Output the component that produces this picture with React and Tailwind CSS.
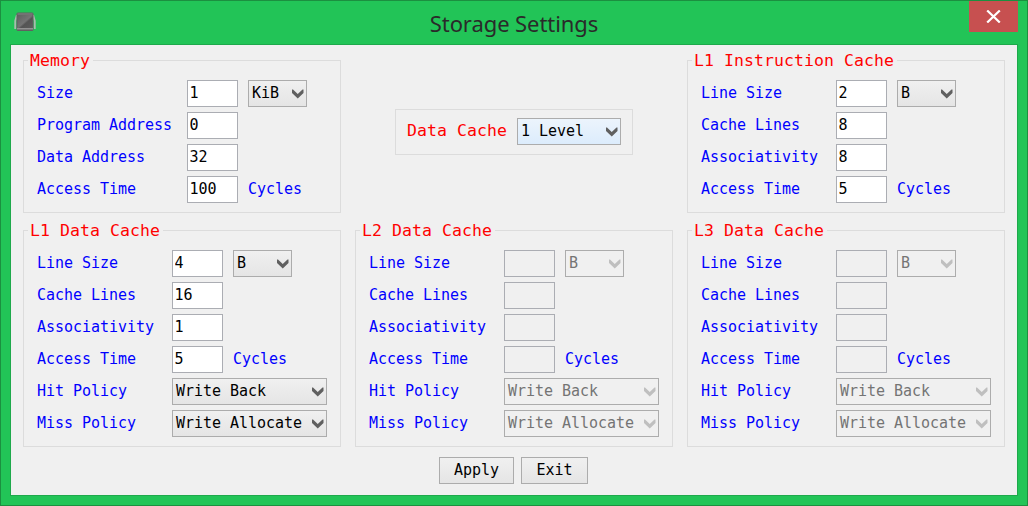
import React from "react";

const MONO = "font-['DejaVu_Sans_Mono',monospace]";

function Chevron({ disabled }) {
  return (
    <svg width="12" height="10" viewBox="0 0 12 10" className={disabled ? "shrink-0 fill-[#bfbfbf]" : "shrink-0 fill-[#606060]"}>
      <path d="M0 0.5H1L5.75 5L10.5 0.5H11.5V4L5.75 9.5L0 4Z" />
    </svg>
  );
}

function Field({ value, disabled }) {
  return (
    <input
      defaultValue={value}
      disabled={disabled}
      className={
        "h-[27px] w-[51px] border border-[#abadb3] pl-[1.5px] pb-[2px] text-[15px] tracking-[-0.03px] text-black outline-none " +
        (disabled ? "bg-[#f0f0f0]" : "bg-white")
      }
    />
  );
}

function Combo({ value, disabled, className, tone }) {
  const look = disabled
    ? "bg-[#f0f0f0] text-[#747474]"
    : tone === "hot"
      ? "bg-linear-to-b from-[#ecf4fc] to-[#dcecfc] text-black"
      : "bg-linear-to-b from-[#f0f0f0] to-[#e5e5e5] text-black";
  return (
    <button
      disabled={disabled}
      className={"flex h-[27px] items-center justify-between border border-[#acacac] pl-[3px] pr-[2px] text-[15px] leading-[16px] tracking-[-0.03px] " + look + " " + className}
    >
      <span className="pb-[2px] whitespace-nowrap">{value}</span>
      <Chevron disabled={disabled} />
    </button>
  );
}

function Row({ label, wide, children }) {
  return (
    <div className="flex h-[27px] items-center">
      <span className={"shrink-0 pb-[2px] " + (wide ? "w-[150px]" : "w-[135px]")}>{label}</span>
      <div className="flex items-center gap-[10px]">{children}</div>
    </div>
  );
}

function Panel({ title, children }) {
  return (
    <section className="relative w-[318px] border border-[#dcdcdc] pt-[19px] pb-[9px] pl-[13px]">
      <h2 className="absolute -top-[9px] left-[4px] bg-[#f0f0f0] pr-[3px] pl-[2px] text-[16.5px] leading-[18px] tracking-[0.07px] text-[#ff0000]">
        {title}
      </h2>
      <div className="flex flex-col gap-[5px] text-[15px] leading-[16px] tracking-[-0.03px] text-[#0000ff]">{children}</div>
    </section>
  );
}

function CachePanel({ title, values = [], disabled, policies }) {
  return (
    <Panel title={title}>
      <Row label="Line Size">
        <Field value={values[0]} disabled={disabled} />
        <Combo value="B" disabled={disabled} className="w-[59px]" />
      </Row>
      <Row label="Cache Lines"><Field value={values[1]} disabled={disabled} /></Row>
      <Row label="Associativity"><Field value={values[2]} disabled={disabled} /></Row>
      <Row label="Access Time">
        <Field value={values[3]} disabled={disabled} />
        <span className="pb-[2px]">Cycles</span>
      </Row>
      {policies && (
        <>
          <Row label="Hit Policy"><Combo value="Write Back" disabled={disabled} className="w-[155px]" /></Row>
          <Row label="Miss Policy"><Combo value="Write Allocate" disabled={disabled} className="w-[155px]" /></Row>
        </>
      )}
    </Panel>
  );
}

function PushButton({ label, className }) {
  return (
    <button className={"flex h-[27px] items-center justify-center border border-[#acacac] bg-linear-to-b from-[#f0f0f0] to-[#e5e5e5] pb-[2px] text-[15px] leading-[16px] tracking-[-0.03px] text-black " + className}>
      {label}
    </button>
  );
}

function AppIcon() {
  return (
    <svg width="22" height="20" viewBox="0 0 22 20">
      <defs>
        <linearGradient id="chip" x1="0" y1="0" x2="1" y2="1">
          <stop offset="0" stopColor="#606060" />
          <stop offset="0.5" stopColor="#747474" />
          <stop offset="0.6" stopColor="#545454" />
          <stop offset="1" stopColor="#5c5c5c" />
        </linearGradient>
      </defs>
      <path d="M3 3L1.3 9V17M19 3L20.7 9V17" fill="none" stroke="#a9bbae" strokeWidth="2" />
      <rect x="2.5" y="0.5" width="17" height="18.5" rx="1.5" fill="#606060" />
      <rect x="3.5" y="1.5" width="15" height="1" fill="#858585" />
      <rect x="3.5" y="3" width="15" height="13" fill="url(#chip)" />
      <rect x="3" y="16" width="16" height="1.5" fill="#929292" />
    </svg>
  );
}

export default function App() {
  return (
    <div className={"flex h-[506px] w-[1028px] flex-col border border-[#1c8f40] bg-[#22c457] px-[9px] pb-[9px] " + MONO}>
      <header className="grid h-[43px] shrink-0 grid-cols-[1fr_auto_1fr] items-start">
        <div className="pt-[11px] pl-[4px]"><AppIcon /></div>
        <h1 className="pt-[6px] font-['Noto_Sans',sans-serif] text-[22px] leading-[32px] tracking-[-0.08px] text-[#2a2a2a]">Storage Settings</h1>
        <button className="flex h-[31px] w-[49px] items-center justify-center justify-self-end bg-[#c75050]">
          <svg width="15" height="13" viewBox="0 0 15 13"><path d="M1.2 0.5L13.8 12.5M13.8 0.5L1.2 12.5" stroke="#fff" strokeWidth="2.2" /></svg>
        </button>
      </header>
      <main className="flex flex-1 flex-col border border-[#1ea94b] bg-[#f0f0f0] pt-[15px] pl-[12px]">
        <div className="flex gap-[14px]">
          <Panel title="Memory">
            <Row wide label="Size"><Field value="1" /><Combo value="KiB" className="w-[59px]" /></Row>
            <Row wide label="Program Address"><Field value="0" /></Row>
            <Row wide label="Data Address"><Field value="32" /></Row>
            <Row wide label="Access Time"><Field value="100" /><span className="pb-[2px]">Cycles</span></Row>
          </Panel>
          <div className="flex w-[318px] justify-center pt-[49px]">
            <div className="flex h-[46px] w-[238px] items-start justify-between border border-[#dcdcdc] pt-[8px] pr-[11px] pl-[11px]">
              <span className="pt-[3px] text-[16.5px] leading-[20px] tracking-[0.07px] text-[#ff0000]">Data Cache</span>
              <Combo value="1 Level" tone="hot" className="w-[104px]" />
            </div>
          </div>
          <CachePanel title="L1 Instruction Cache" values={["2", "8", "8", "5"]} />
        </div>
        <div className="mt-[17px] flex gap-[14px]">
          <CachePanel title="L1 Data Cache" values={["4", "16", "1", "5"]} policies />
          <CachePanel title="L2 Data Cache" disabled policies />
          <CachePanel title="L3 Data Cache" disabled policies />
        </div>
        <div className="mt-[10px] flex gap-[7px] pl-[416px]">
          <PushButton label="Apply" className="w-[75px]" />
          <PushButton label="Exit" className="w-[67px]" />
        </div>
      </main>
    </div>
  );
}
